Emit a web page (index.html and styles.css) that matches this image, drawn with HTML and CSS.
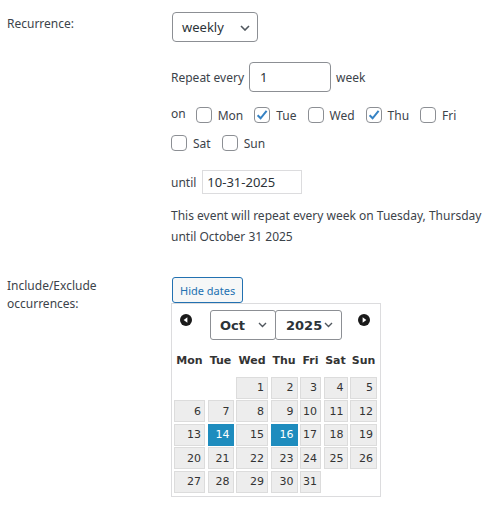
FILE: index.html
```html
<!DOCTYPE html>
<html lang="en">
<head>
<meta charset="utf-8">
<title>Recurrence</title>
<link rel="stylesheet" href="styles.css">
</head>
<body>
<div class="form">
  <div class="row row-recur">
    <div class="label">Recurrence:</div>
    <div class="field">
      <div class="select select-main">
        <span>weekly</span>
        <svg class="chev" width="10" height="6" viewBox="0 0 10 6"><path d="M1 1l4 4 4-4" fill="none" stroke="#50575e" stroke-width="1.6"/></svg>
      </div>

      <div class="line repeat">
        <span>Repeat every</span>
        <div class="input input-num">1</div>
        <span>week</span>
      </div>

      <div class="line days">
        <span class="on">on</span>
        <label class="day"><span class="cb"></span>Mon</label>
        <label class="day"><span class="cb checked"><svg width="16" height="16" viewBox="0 0 16 16"><path d="M3.6 8.2l3 3.1L12.6 3.8" fill="none" stroke="#3582c4" stroke-width="2"/></svg></span>Tue</label>
        <label class="day"><span class="cb"></span>Wed</label>
        <label class="day"><span class="cb checked"><svg width="16" height="16" viewBox="0 0 16 16"><path d="M3.6 8.2l3 3.1L12.6 3.8" fill="none" stroke="#3582c4" stroke-width="2"/></svg></span>Thu</label>
        <label class="day"><span class="cb"></span>Fri</label>
      </div>
      <div class="line days days-2">
        <label class="day"><span class="cb"></span>Sat</label>
        <label class="day"><span class="cb"></span>Sun</label>
      </div>

      <div class="line until">
        <span>until</span>
        <div class="input input-date">10-31-2025</div>
      </div>

      <p class="desc">This event will repeat every week on Tuesday, Thursday<br>until October 31 2025</p>
    </div>
  </div>

  <div class="row row-dates">
    <div class="label">Include/Exclude<br>occurrences:</div>
    <div class="field">
      <button class="btn" type="button">Hide dates</button>
      <div class="cal">
        <div class="cal-title">
          <svg class="nav prev" width="12" height="12" viewBox="0 0 12 12"><circle cx="6" cy="6" r="6" fill="#1a1a1a"/><path d="M3.6 6L7.4 3.2v5.6z" fill="#fff"/></svg>
          <div class="cal-selects">
            <div class="select select-cal"><span>Oct</span><svg class="chev" width="9" height="6" viewBox="0 0 9 6"><path d="M1 1l3.5 3.5L8 1" fill="none" stroke="#50575e" stroke-width="1.4"/></svg></div>
            <div class="select select-cal year"><span>2025</span><svg class="chev" width="9" height="6" viewBox="0 0 9 6"><path d="M1 1l3.5 3.5L8 1" fill="none" stroke="#50575e" stroke-width="1.4"/></svg></div>
          </div>
          <svg class="nav next" width="12" height="12" viewBox="0 0 12 12"><circle cx="6" cy="6" r="6" fill="#1a1a1a"/><path d="M8.4 6L4.6 3.2v5.6z" fill="#fff"/></svg>
        </div>
        <div class="cal-grid">
          <div class="dow">Mon</div><div class="dow">Tue</div><div class="dow">Wed</div><div class="dow">Thu</div><div class="dow">Fri</div><div class="dow">Sat</div><div class="dow">Sun</div>
          <div class="blank"></div><div class="blank"></div><div class="d">1</div><div class="d">2</div><div class="d">3</div><div class="d">4</div><div class="d">5</div>
          <div class="d">6</div><div class="d">7</div><div class="d">8</div><div class="d">9</div><div class="d">10</div><div class="d">11</div><div class="d">12</div>
          <div class="d">13</div><div class="d sel">14</div><div class="d">15</div><div class="d sel">16</div><div class="d">17</div><div class="d">18</div><div class="d">19</div>
          <div class="d">20</div><div class="d">21</div><div class="d">22</div><div class="d">23</div><div class="d">24</div><div class="d">25</div><div class="d">26</div>
          <div class="d">27</div><div class="d">28</div><div class="d">29</div><div class="d">30</div><div class="d">31</div><div class="blank"></div><div class="blank"></div>
        </div>
      </div>
    </div>
  </div>
</div>
</body>
</html>
```

FILE: styles.css
```css
* { box-sizing: border-box; }

body {
  margin: 0;
  background: #fff;
  color: #3c434a;
  font-family: "Noto Sans", "Open Sans", sans-serif;
  font-size: 12px;
}

.form {
  padding-top: 12px;
}

.row {
  display: grid;
  grid-template-columns: 171px 1fr;
}

.label {
  padding-left: 7px;
  line-height: 18px;
}

.row-recur .label {
  padding-top: 3px;
}

.row-dates {
  margin-top: 30px;
}

.field {
  display: flex;
  flex-direction: column;
  align-items: flex-start;
}

.select {
  display: flex;
  align-items: center;
  justify-content: space-between;
  height: 30px;
  border: 1px solid #8c8f94;
  border-radius: 4px;
  background: #fff;
  color: #2c3338;
}

.select-main {
  width: 86px;
  margin-left: 1px;
  padding: 0 7px 0 9px;
  font-size: 13px;
}

.select-main .chev {
  margin-top: 2px;
}

.line {
  display: flex;
  align-items: center;
}

.repeat {
  margin-top: 20px;
  gap: 5px;
}

.input {
  display: flex;
  align-items: center;
  background: #fff;
  color: #2c3338;
}

.input-num {
  width: 82px;
  height: 30px;
  padding-left: 10px;
  border: 1px solid #8c8f94;
  border-radius: 4px;
  font-size: 13px;
}

.days {
  margin-top: 15px;
  height: 16px;
}

.days-2 {
  margin-top: 12px;
}

.on {
  margin-right: 10px;
  margin-top: -3px;
}

.day {
  display: flex;
  align-items: center;
  margin-right: 11px;
}

.cb {
  display: block;
  width: 16px;
  height: 16px;
  margin-right: 6px;
  border: 1px solid #8c8f94;
  border-radius: 4px;
  background: #fff;
  position: relative;
}

.cb svg {
  position: absolute;
  left: -1px;
  top: -1px;
}

.until {
  margin-top: 19px;
  gap: 6px;
}

.input-date {
  width: 100px;
  height: 24px;
  padding-left: 4px;
  border: 1px solid #dcdcde;
  font-size: 13px;
}

.desc {
  margin: 11px 0 0;
  line-height: 21px;
}

.btn {
  height: 26px;
  margin-left: 1px;
  padding: 0 7px;
  border: 1px solid #2271b1;
  border-radius: 3px;
  background: #f6f7f7;
  color: #2271b1;
  font-family: "Noto Sans", "Open Sans", sans-serif;
  font-size: 11px;
}

.cal {
  width: 210px;
  padding: 6px 3px 3px 2px;
  border: 1px solid #dcdcde;
  font-family: "DejaVu Sans", Verdana, sans-serif;
}

.cal-title {
  display: flex;
  align-items: flex-start;
  height: 30px;
}

.nav {
  margin-top: 4px;
}

.nav.prev {
  margin-left: 6px;
  margin-right: 18px;
}

.nav.next {
  margin-left: 16px;
}

.cal-selects {
  display: flex;
}

.select-cal {
  width: 66px;
  padding: 0 8px 0 9px;
  border-radius: 3px;
  font-size: 13px;
  font-weight: bold;
}

.select-cal.year {
  margin-left: -1px;
  width: 67px;
  padding-left: 10px;
}

.cal-grid {
  display: grid;
  grid-template-columns: 31px 26px 32px 27px 21px 24px 27px;
  grid-auto-rows: 22px;
  grid-template-rows: 30px;
  column-gap: 2.5px;
  row-gap: 1.5px;
  margin-top: 5px;
  font-size: 11px;
}

.dow {
  display: flex;
  align-items: center;
  justify-content: center;
  font-weight: bold;
  color: #333;
}

.d {
  display: flex;
  align-items: center;
  justify-content: flex-end;
  padding-right: 3px;
  border: 1px solid #dcdcdc;
  background: #ededed;
  color: #333;
}

.d.sel {
  border-color: #1e8cbe;
  background: #1e8cbe;
  color: #fff;
}
```
